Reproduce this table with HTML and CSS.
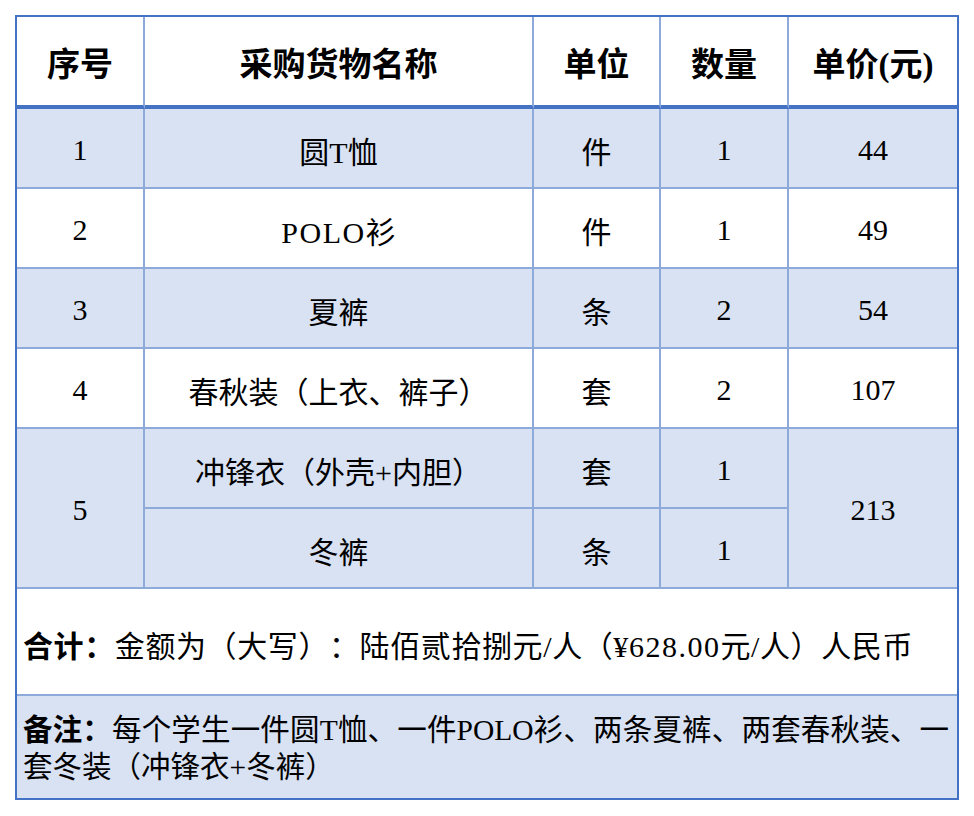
FILE: index.html
```html
<!DOCTYPE html>
<html lang="zh-CN">
<head>
<meta charset="utf-8">
<title>采购货物</title>
<link rel="stylesheet" href="styles.css">
</head>
<body>
<div class="frame">
<table class="sheet">
<colgroup>
<col class="c1"><col class="c2"><col class="c3"><col class="c4"><col class="c5">
</colgroup>
<thead>
<tr class="head">
<th>序号</th><th>采购货物名称</th><th>单位</th><th>数量</th><th class="r">单价(元)</th>
</tr>
</thead>
<tbody>
<tr class="row shade"><td>1</td><td>圆T恤</td><td>件</td><td>1</td><td class="r">44</td></tr>
<tr class="row"><td>2</td><td><span class="lat">POLO</span>衫</td><td>件</td><td>1</td><td class="r">49</td></tr>
<tr class="row shade"><td>3</td><td>夏裤</td><td>条</td><td>2</td><td class="r">54</td></tr>
<tr class="row"><td>4</td><td>春秋装（上衣、裤子）</td><td>套</td><td>2</td><td class="r">107</td></tr>
<tr class="row shade"><td rowspan="2">5</td><td>冲锋衣（外壳+内胆）</td><td>套</td><td>1</td><td class="r" rowspan="2">213</td></tr>
<tr class="row shade"><td>冬裤</td><td>条</td><td>1</td></tr>
<tr class="total"><td colspan="5" class="r"><b>合计：</b>金额为（大写）：陆佰贰拾捌元/人（¥<span class="lat">628.00</span>元/人）人民币</td></tr>
<tr class="notes shade"><td colspan="5" class="r last">
<div class="noteline first"><b>备注：</b>每个学生一件圆T恤、一件POLO衫、两条夏裤、两套春秋装、一</div>
<div class="noteline">套冬装（冲锋衣+冬裤）</div>
</td></tr>
</tbody>
</table>
</div>
</body>
</html>
```
FILE: styles.css
```css
html, body {
  margin: 0;
  padding: 0;
  background: #ffffff;
}
body {
  padding: 15px 0 0 15px;
  font-family: "Liberation Serif", "Noto Sans CJK SC", serif;
  color: #000;
  text-spacing-trim: space-all;
}
.frame {
  width: 944px;
  box-sizing: border-box;
  border: 2px solid #4472c4;
}
.sheet {
  border-collapse: separate;
  border-spacing: 0;
  width: 940px;
  table-layout: fixed;
}
.c1 { width: 128px; }
.c2 { width: 389px; }
.c3 { width: 127px; }
.c4 { width: 128px; }
.c5 { width: 168px; }

.sheet th, .sheet td {
  padding: 0;
  box-sizing: border-box;
  border-right: 2px solid #8eaadb;
  border-bottom: 2px solid #8eaadb;
  text-align: center;
  vertical-align: middle;
}
.sheet .r { border-right: none; }
.sheet .last { border-bottom: none; }

.head th {
  height: 92px;
  font-size: 33px;
  font-weight: 700;
  border-bottom: 4px solid #4472c4;
  padding-top: 1px;
}
.row td {
  height: 80px;
  font-size: 30px;
  font-weight: 400;
  padding-top: 4px;
}
.shade td { background: #d9e2f3; }

.lat { letter-spacing: 1.5px; }

.total td {
  height: 107px;
  font-size: 30px;
  text-align: left;
  padding-left: 6px;
  letter-spacing: 0.6px;
  padding-top: 4px;
}
.total b, .notes b { font-weight: 700; }

.notes td {
  height: 102px;
  font-size: 29.5px;
  text-align: left;
  padding: 4px 8px 0 6px;
}
.noteline {
  line-height: 37px;
  white-space: nowrap;
}
.noteline.first {
  text-align: justify;
  text-align-last: justify;
}
```
